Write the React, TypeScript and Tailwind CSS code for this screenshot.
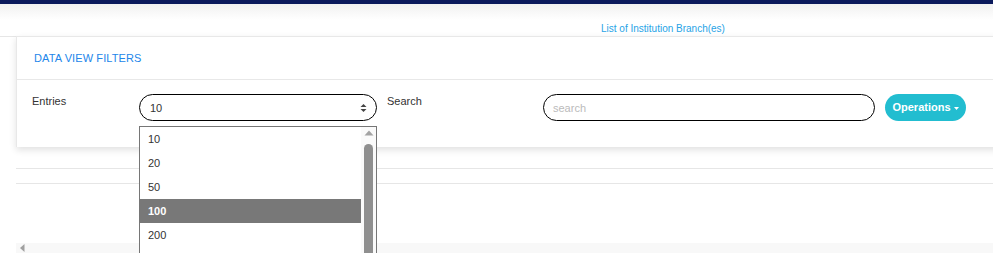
import * as React from "react";

const options = ["10", "20", "50", "100", "200"];

export default function App() {
    return (
        <div className="relative w-[993px] h-[253px] overflow-hidden bg-white font-['Liberation_Sans',Arial,sans-serif] text-[#333]">
            {/* Top bar */}
            <div className="h-1 bg-[#0b1a5c]" />

            {/* Page title strip */}
            <div className="h-[33px] bg-gradient-to-b from-[#f1f1f1] via-white to-white border-b border-[#e6e6e6] pl-[601px] pt-[19px]">
                <span className="block text-[10px] leading-3 text-[#27a3e6] whitespace-nowrap">List of Institution Branch(es)</span>
            </div>

            {/* Filters card */}
            <div className="ml-4 w-[1000px] -mt-px border-t border-l border-[#e8e8e8] bg-white shadow-[0_3px_7px_rgba(0,0,0,0.12)]">
                <div className="h-[43px] border-b border-[#e8e8e8] flex items-center pl-[17px]">
                    <span className="text-[11px] text-[#2286ea] tracking-[0.1px]">DATA VIEW FILTERS</span>
                </div>
                <div className="h-[67px] flex items-start pt-[14px] pl-[15px]">
                    <span className="w-[107px] pt-px text-[11px] leading-3">Entries</span>
                    <div className="relative">
                        <div className="w-[238px] h-[27px] rounded-full border border-black flex items-center justify-between pl-[10px] pr-[9px]">
                            <span className="text-[11px] pt-[2px]">10</span>
                            <svg width="7" height="10" viewBox="0 0 7 10" className="mt-px">
                                <path d="M3.5 1 L6.5 4 L0.5 4 Z" fill="#444" />
                                <path d="M3.5 9 L6.5 6 L0.5 6 Z" fill="#444" />
                            </svg>
                        </div>

                        {/* Open dropdown list */}
                        <div className="absolute left-0 top-[32px] w-[238px] h-[140px] border border-[#767676] bg-white flex z-10">
                            <div className="w-[221px]">
                                {options.map((o) => (
                                    <div
                                        key={o}
                                        className={
                                            o === "100"
                                                ? "h-6 flex items-center pl-2 text-[11px] bg-[#787878] text-white font-bold"
                                                : "h-6 flex items-center pl-2 text-[11px] text-[#333]"
                                        }
                                    >
                                        {o}
                                    </div>
                                ))}
                            </div>
                            <div className="flex-1 bg-[#fafafa] flex flex-col items-center pt-[3px]">
                                <svg width="10" height="6" viewBox="0 0 10 6">
                                    <path d="M5 0.5 L9.5 5.5 L0.5 5.5 Z" fill="#a3a3a3" />
                                </svg>
                                <div className="mt-[8px] w-[9px] h-[120px] rounded-t-full bg-[#8f8f8f]" />
                            </div>
                        </div>
                    </div>
                    <span className="ml-[10px] w-[156px] pt-px text-[11px] leading-3">Search</span>
                    <div className="w-[332px] h-[27px] rounded-full border border-black flex items-center pl-[9px]">
                        <span className="text-[11px] text-[#bbb] pt-px">search</span>
                    </div>
                    <button className="ml-[10px] w-[81px] h-[27px] rounded-full bg-[#22bdd0] text-white text-[11px] font-bold flex items-center justify-center gap-[3px]">
                        Operations
                        <svg width="5" height="3" viewBox="0 0 5 3" className="mt-px">
                            <path d="M0 0 L5 0 L2.5 3 Z" fill="#fff" />
                        </svg>
                    </button>
                </div>
            </div>

            {/* Table separators */}
            <div className="ml-4 mt-[21px] border-t border-[#e6e6e6]" />
            <div className="ml-4 mt-[14px] border-t border-[#e6e6e6]" />

            {/* Horizontal scroll bar */}
            <div className="absolute left-4 right-0 top-[243px] h-[10px] bg-[#f8f8f8] flex items-center pl-[4px]">
                <svg width="5" height="8" viewBox="0 0 5 8">
                    <path d="M4.5 0 L4.5 8 L0 4 Z" fill="#a0a0a0" />
                </svg>
            </div>
        </div>
    );
}
